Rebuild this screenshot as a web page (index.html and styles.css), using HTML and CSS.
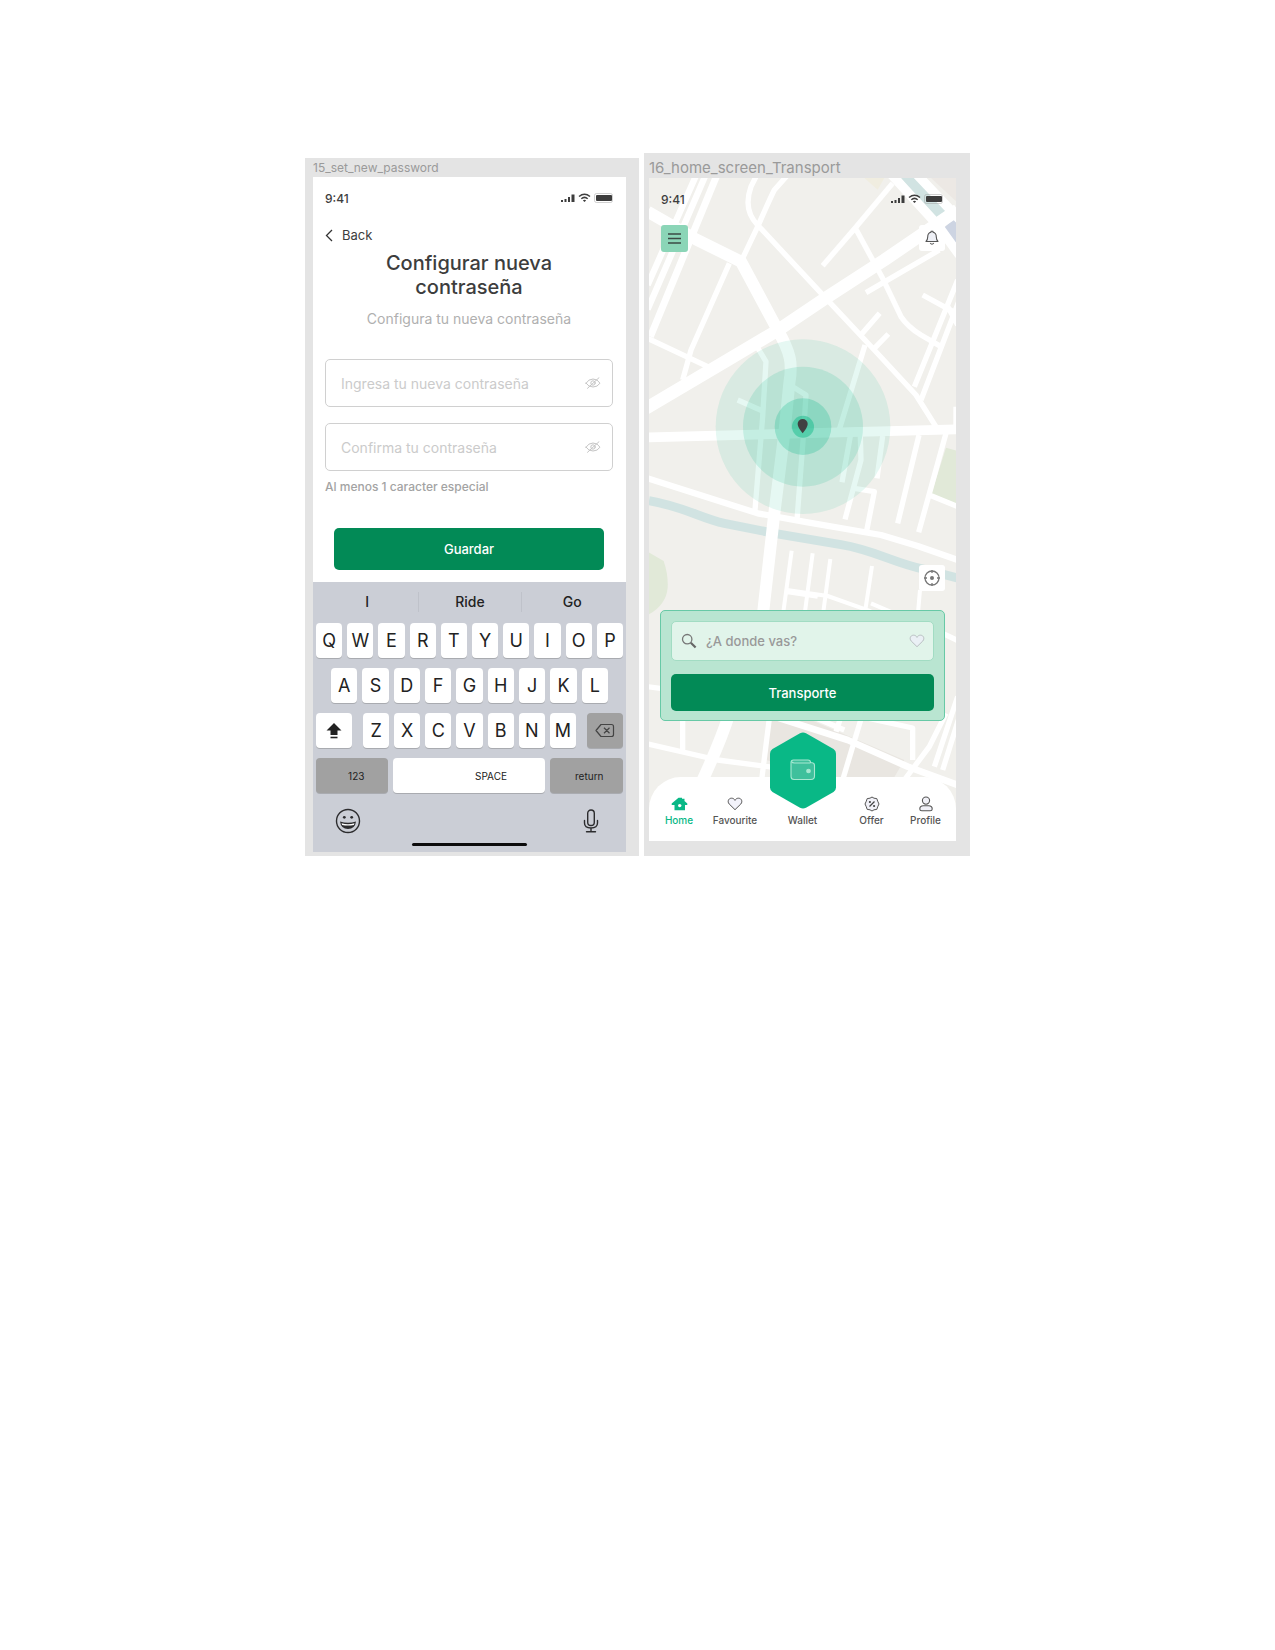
FILE: index.html
```html
<!DOCTYPE html>
<html lang="es">
<head>
<meta charset="utf-8">
<meta name="viewport" content="width=device-width, initial-scale=1">
<title>Configurar nueva contraseña</title>
<link rel="stylesheet" href="styles.css">
</head>
<body>
<svg class="defs" aria-hidden="true">
  <symbol id="status" viewBox="0 0 54 12">
    <g fill="#3d3d3d">
      <rect x="1" y="8" width="2" height="2"/><rect x="4.500" y="7" width="2" height="3"/><rect x="8" y="5" width="2" height="5"/><rect x="11.500" y="2.500" width="3" height="7.500"/>
      <rect x="36" y="3" width="16" height="6" rx="1"/>
    </g>
    <rect x="34.500" y="1.500" width="18" height="9" rx="2" fill="none" stroke="#999" stroke-opacity=".45"/>
    <g fill="none" stroke="#3d3d3d" stroke-width="1.500"><path d="M19 4.500Q24.500 0 30 4.500"/><path d="M21.300 6.800Q24.500 4 27.700 6.800"/></g>
    <path d="M22.900 8.400Q24.500 7 26.100 8.400L24.500 10Z" fill="#3d3d3d"/>
  </symbol>
  <symbol id="eye-off" viewBox="0 0 16 12">
    <g fill="none" stroke="#c4c4c4" stroke-linecap="round"><path d="M1 6.200Q3.500 2 8 2t7 4.200Q12.500 10 8 10T1 6.200Z"/><circle cx="8" cy="6" r="2.200"/><path d="M2.500 11.300 14 .7"/></g>
  </symbol>
  <symbol id="heart" viewBox="0 0 16 14">
    <path d="M8 12.700 2.200 7C.2 4.800 1.300 1.300 4.400 1.200 6.300 1.100 7.400 2.200 8 3.400c.6-1.200 1.700-2.300 3.600-2.200 3.100.1 4.200 3.600 2.200 5.800Z" fill="#eeeefa" fill-opacity=".7" stroke="currentColor" stroke-linejoin="round"/>
  </symbol>
</svg>

<main class="board">
  <section class="frame frame-password">
    <h2 class="frame-name">15_set_new_password</h2>
    <div class="screen password">
      <div class="status"><span>9:41</span><svg class="status-icons"><use href="#status"/></svg></div>
      <a class="back" href="#"><svg viewBox="0 0 8 13"><path d="M7 1 1.500 6.500 7 12" fill="none" stroke="#333" stroke-width="1.300"/></svg>Back</a>
      <form class="form">
        <h1>Configurar nueva contraseña</h1>
        <p class="lead">Configura tu nueva contraseña</p>
        <label class="field"><input type="password" placeholder="Ingresa tu nueva contraseña" aria-label="Ingresa tu nueva contraseña"><svg><use href="#eye-off"/></svg></label>
        <label class="field"><input type="password" placeholder="Confirma tu contraseña" aria-label="Confirma tu contraseña"><svg><use href="#eye-off"/></svg></label>
        <p class="hint">Al menos 1 caracter especial</p>
        <button class="primary save" type="button">Guardar</button>
      </form>
      <div class="keyboard">
        <div class="suggestions"><button>I</button><button>Ride</button><button>Go</button></div>
        <div class="keys"><button>Q</button><button>W</button><button>E</button><button>R</button><button>T</button><button>Y</button><button>U</button><button>I</button><button>O</button><button>P</button></div>
        <div class="keys home-row"><button>A</button><button>S</button><button>D</button><button>F</button><button>G</button><button>H</button><button>J</button><button>K</button><button>L</button></div>
        <div class="keys shift-row">
          <button class="modifier" aria-label="Shift"><svg width="16" height="18" viewBox="0 0 16 18"><path d="M8 1 15.500 8.500H11.500V13h-7V8.500H.5Z" fill="#222"/><path d="M4.500 15.500h7" stroke="#222" stroke-width="1.600"/></svg></button>
          <div class="keys letters"><button>Z</button><button>X</button><button>C</button><button>V</button><button>B</button><button>N</button><button>M</button></div>
          <button class="modifier dark" aria-label="Delete"><svg width="20" height="15" viewBox="0 0 20 15"><path d="M6 1.500h10.500q2 0 2 2v8q0 2-2 2H6L1 7.500Z M9 4.800l5.500 5.400M14.500 4.800 9 10.200" fill="none" stroke="#444" stroke-width="1.200" stroke-linejoin="round"/></svg></button>
        </div>
        <div class="keys bottom-row"><button class="dark numbers">123</button><button class="space">SPACE</button><button class="dark return">return</button></div>
        <div class="extras">
          <button aria-label="Emoji"><svg width="26" height="26" viewBox="0 0 26 26"><circle cx="13" cy="13" r="11.500" fill="none" stroke="#2c2c2e" stroke-width="1.400"/><circle cx="9.300" cy="9.300" r="1.400" fill="#2c2c2e"/><circle cx="16.700" cy="9.300" r="1.400" fill="#2c2c2e"/><path d="M5 13.500q8 2.500 16 0-1 7.500-8 7.500t-8-7.500Z" fill="#2c2c2e"/><path d="M6.500 15.300q6.500 1.700 13 0l-.6 1.600q-6 1.200-11.800 0Z" fill="#fff"/></svg></button>
          <button aria-label="Dictado"><svg width="16" height="24" viewBox="0 0 16 24"><g fill="none" stroke="#2c2c2e" stroke-width="1.400" stroke-linecap="round"><rect x="4.700" y="1" width="6.600" height="15.500" rx="3.300"/><path d="M1.500 11.500v2.500q0 5 6.500 5t6.500-5v-2.500M8 19v3.500M3.500 22.700h9"/></g></svg></button>
        </div>
        <div class="home-bar"></div>
      </div>
    </div>
  </section>

  <section class="frame frame-home">
    <h2 class="frame-name">16_home_screen_Transport</h2>
    <div class="screen transport">
      <svg class="map" viewBox="24 84 921 1989" preserveAspectRatio="xMidYMin slice" aria-hidden="true">
        <rect x="0" y="0" width="1000" height="2200" fill="#f1f0ec"/>
        <!-- parks, blocks and water -->
        <path d="M670 84h60l-20 35Z" fill="#f0ede0"/>
        <path d="M870 84h75v70Z" fill="#ece8e4"/>
        <path d="M780 84h60l76 98-38 26Z" fill="#d1e3e2"/>
        <path d="M908 235l32-32h10v88Z" fill="#cdd4e2"/>
        <path d="M915 893l35 10v160l-80-28Z" fill="#e1e9d8"/>
        <path d="M20 1205l48 28q14 40 12 80-4 50-56 80Z" fill="#e1e9d8"/>
        <path d="M390 1710h120l280 120-35 60H590L375 1830Z" fill="#e9e6e1"/>
        <path d="M24 1052C130 1070 180 1105 250 1120L400 1150 600 1184C700 1200 760 1240 850 1258L950 1284" fill="none" stroke="#d1e3e2" stroke-width="27"/>
        <g fill="none" stroke="#fff" stroke-width="16" stroke-linejoin="round">
          <path d="M168 70 20 405M196 70 20 478" stroke-width="19"/>
          <path d="M230 70 28 560" stroke-width="21"/>
          <path d="M20 185 165 268 300 335 410 540C450 610 455 640 445 700L430 850 400 1090 365 1400" stroke-width="36"/>
          <path d="M350 70 330 110Q305 180 350 225L550 440 700 600 825 735 888 835"/>
          <path d="M440 75 400 120Q385 150 350 230L300 335M265 340 150 600 125 690"/>
          <path d="M15 775 260 630 415 538 560 440 730 330 950 180" stroke-width="38"/>
          <path d="M755 100 640 237 545 347M645 238 725 385 780 500Q800 530 840 555L900 590"/>
          <path d="M675 428 895 300M845 435 950 492"/>
          <path d="M748 70 890 225 955 315" stroke-width="28"/>
          <path d="M815 60 955 208" stroke-width="28"/>
          <path d="M950 390 820 710M955 450 840 750M915 460 950 525"/>
          <path d="M655 560 716 490M700 595 742 552M20 565 205 652"/>
          <path d="M20 862 950 838" stroke-width="29"/>
          <path d="M345 585 375 635 365 800 342 1080M290 750 365 783M455 710 495 735 487 860 468 1110M672 585 590 855M945 770V840"/>
          <path d="M628 858 603 997M658 858 660 930 612 1108M725 858 708 985M834 855 770 1120M915 850 833 1147M865 1035 950 1070M640 1015 700 1025 677 1142"/>
          <path d="M20 985 350 1090 500 1117 720 1155 830 1188 950 1230" stroke-width="19"/>
          <path d="M452 1202 425 1400M515 1210 490 1400M568 1227 545 1400M693 1248 670 1400M438 1320 560 1338 690 1384M690 1360 760 1390M837 1320 830 1400M430 1325 530 1340" stroke-width="12"/>
          <path d="M905 1450 955 1474M20 1610 80 1618M125 1700V1800"/>
          <path d="M262 1700Q240 1770 185 1890" stroke-width="36"/>
          <path d="M20 1782 230 1830 420 1855M385 1705 362 1890"/>
          <path d="M400 1700 620 1770 800 1850 950 1905" stroke-width="20"/>
          <path d="M515 1700 610 1740M600 1700 585 1745M662 1700 605 1890M660 1700 815 1734V1830M820 1705 780 1700"/>
          <path d="M950 1640 880 1850M915 1690 865 1790 790 1890M955 1700 905 1860"/>
        </g>
        <!-- current location -->
        <g fill="#09b886">
          <circle cx="486" cy="830" r="262" fill-opacity=".1"/>
          <circle cx="486" cy="830" r="180" fill-opacity=".15"/>
          <circle cx="486" cy="830" r="85" fill-opacity=".25"/>
          <circle cx="486" cy="830" r="33" fill-opacity=".45"/>
        </g>
        <path d="M485 850Q470 832 470 822a15 15 0 0 1 30 0Q500 832 485 850Z" fill="#414141"/>
      </svg>
      <div class="status"><span>9:41</span><svg class="status-icons"><use href="#status"/></svg></div>
      <div class="toolbar">
        <button class="square menu" aria-label="Menu"><svg width="15" height="13" viewBox="0 0 15 13"><path d="M1 2h13M1 6.500h13M1 11h13" stroke="#3c4a45" stroke-width="1.300"/></svg></button>
        <button class="square" aria-label="Notificaciones"><svg width="14" height="16" viewBox="0 0 14 16"><path d="M1 11.500Q2.700 10 2.700 7 2.700 3 6 2.300v-1h2v1Q11.300 3 11.300 7q0 3 1.700 4.500Z" fill="#eef0f6" stroke="#555" stroke-width="1.100" stroke-linejoin="round"/><path d="M5.200 13q1.800 2.500 3.600 0" fill="none" stroke="#555" stroke-width="1.100"/></svg></button>
      </div>
      <div class="locate"><button class="square" aria-label="Mi ubicación"><svg width="18" height="18" viewBox="0 0 18 18"><g fill="none" stroke="#777" stroke-width="1.300"><circle cx="9" cy="9" r="7"/><path d="M9 1v3M9 14v3M1 9h3M14 9h3"/></g><circle cx="9" cy="9" r="2" fill="#777"/></svg></button></div>
      <form class="search-card">
        <label class="search">
          <svg width="16" height="16" viewBox="0 0 16 16"><circle cx="6.200" cy="6.200" r="4.700" fill="none" stroke="#777" stroke-width="1.300"/><path d="m9.800 9.800 4.800 4.700" stroke="#666" stroke-width="2.200"/></svg>
          <input type="text" placeholder="¿A donde vas?" aria-label="¿A donde vas?">
          <svg class="like" width="16" height="14"><use href="#heart"/></svg>
        </label>
        <button class="primary" type="button">Transporte</button>
      </form>
      <nav class="tabs">
        <a class="active" href="#"><svg width="17" height="14" viewBox="0 0 17 14"><path d="M7.500.8 11 .8 11 1.800 13.500 1.800 13.500 4.100 16.300 6.500v1.500H14v5.200H3.500V8H.7V6.500Z" fill="#09b886"/><circle cx="8.700" cy="8.600" r="1.700" fill="#fff"/></svg>Home</a>
        <a href="#"><svg width="16" height="14"><use href="#heart"/></svg>Favourite</a>
        <a class="wallet" href="#"><svg class="hexagon" width="66" height="77" viewBox="0 0 66 77"><path d="M30 1.300Q33-.3 36 1.300L63.500 17Q66 18.500 66 21.500v34Q66 58.500 63.500 60L36 75.800Q33 77.300 30 75.800L2.500 60Q0 58.500 0 55.500v-34Q0 18.500 2.500 17Z" fill="#09b886"/><g stroke="#a8e8d2" stroke-width="1.100"><path d="M21 30.500q0-2.500 2.500-2.500H38q2.500 0 2.500 2.500 4 0 4 3V44q0 3.500-3.500 3.500H24q-3 0-3-3Z" fill="#3fc09c"/><path d="M21.500 29.500q.5 1.500 3 1.500h16" fill="none"/><circle cx="38.500" cy="39" r="1.800" fill="#a8e8d2"/></g></svg>Wallet</a>
        <a href="#"><svg width="16" height="16" viewBox="0 0 16 16"><path d="M8 1 10 2.200 12.800 2.600 13.700 5.200 15 8 13.700 10.800 12.800 13.400 10 13.800 8 15 6 13.800 3.200 13.400 2.300 10.800 1 8 2.300 5.200 3.200 2.600 6 2.200Z" fill="#f1f1f8" stroke="#555" stroke-linejoin="round"/><path d="m5.500 10.500 5-5" stroke="#444" stroke-width="1.200"/><circle cx="5.900" cy="6" r="1.100" fill="#444"/><circle cx="10.100" cy="10" r="1.100" fill="#444"/></svg>Offer</a>
        <a href="#"><svg width="14" height="16" viewBox="0 0 14 16"><g fill="#f1f1f8" stroke="#555" stroke-width="1.100"><circle cx="7" cy="4.600" r="3.600"/><path d="M.8 13q0-3.200 3.500-3.200h5.400q3.500 0 3.500 3.200 0 1.800-2 1.800H2.800q-2 0-2-1.800Z"/></g></svg>Profile</a>
      </nav>
    </div>
  </section>
</main>
</body>
</html>
```
FILE: styles.css
```css
* { box-sizing: border-box; }

body {
  margin: 0;
  background: #fff;
  color: #3d3d3d;
  font-family: Inter, "Liberation Sans", sans-serif;
}

h1, h2, p { margin: 0; }
button, input { font: inherit; color: inherit; border: 0; padding: 0; margin: 0; }
button { background: none; }
a { color: inherit; text-decoration: none; }
svg { display: block; flex: none; }
.defs { position: absolute; width: 0; height: 0; }

.board {
  display: flex;
  flex-wrap: wrap;
  justify-content: center;
  align-items: flex-end;
  gap: 5px;
  padding: 153px 16px 48px;
}

.frame { min-width: 0; background: #e4e4e4; }
.frame-password { flex: 0 1 334px; padding: 0 13px 4px 8px; }
.frame-home { flex: 0 1 326px; padding: 0 14px 15px 5px; }

.frame-name {
  color: #9a9a9a;
  font-size: 12px;
  font-weight: 400;
  line-height: 19px;
}
.frame-home .frame-name { font-size: 15px; line-height: 25px; padding-top: 2px; height: 25px; }

.status {
  display: flex;
  align-items: center;
  justify-content: space-between;
  height: 42px;
  padding: 0 12px;
  font-size: 12px;
  font-weight: 500;
}
.status-icons { width: 54px; height: 12px; }

/* Password screen */
.password { background: #fff; }

.back {
  display: flex;
  align-items: center;
  gap: 9px;
  height: 32px;
  padding: 0 12px;
  font-size: 13px;
}
.back svg { width: 8px; height: 13px; }

.form {
  display: flex;
  flex-direction: column;
  padding: 0 13px 12px 12px;
}
.form h1 {
  align-self: center;
  max-width: 200px;
  font-size: 20px;
  font-weight: 500;
  line-height: 24px;
  text-align: center;
}
.lead {
  margin-top: 10px;
  color: #b0b0b0;
  font-size: 14px;
  line-height: 20px;
  text-align: center;
}
.field {
  display: flex;
  align-items: center;
  height: 48px;
  margin-bottom: 16px;
  padding: 0 11px 0 15px;
  border: 1px solid #d0d0d0;
  border-radius: 5px;
}
.lead + .field { margin-top: 30px; }
.field svg { width: 16px; height: 12px; }
input { flex: 1; width: 100%; min-width: 0; background: none; }
input::placeholder { color: inherit; opacity: 1; }
.field input { color: #cbcbcb; font-size: 14px; }
.hint {
  margin-top: -8px;
  color: #a3a3a3;
  font-size: 12px;
  font-weight: 500;
  line-height: 16px;
}

.primary {
  border-radius: 5px;
  background: #028a56;
  color: #fff;
  font-size: 13px;
  font-weight: 500;
}
.save { height: 42px; margin: 33px 9px 0; }

.keyboard {
  display: flex;
  flex-direction: column;
  gap: 10px;
  padding: 4px 3px 6px;
  background: #cbced6;
}
.suggestions {
  display: grid;
  grid-template-columns: repeat(3, 1fr);
  align-items: center;
  height: 27px;
  padding-top: 4px;
  font-size: 14px;
  font-weight: 500;
  color: #222;
}
.suggestions button { height: 20px; }
.suggestions button + button { border-left: 1px solid #bfc2ca; }

.keys { display: flex; gap: 5px; color: #222; font-size: 18px; }
.keys button {
  display: flex;
  align-items: center;
  justify-content: center;
  flex: 1 1 0;
  height: 35px;
  min-width: 0;
  border-radius: 4px;
  background: #fff;
  box-shadow: 0 1px 0 #a9abb0;
}
.home-row { padding: 0 15px; }
.shift-row { gap: 11px; }
.letters { flex: 1; }
.keys .modifier { flex: 0 0 36px; }
.keys .dark { background: #a1a1a1; }
.bottom-row {
  display: grid;
  grid-template-columns: 72fr 150fr 73fr;
  font-size: 10px;
}
.bottom-row .numbers { padding-left: 8px; }
.bottom-row .space { padding-left: 44px; }
.bottom-row .return { padding-left: 6px; }

.extras {
  display: flex;
  justify-content: space-between;
  align-items: center;
  height: 35px;
  margin-bottom: 3px;
  padding: 0 24px 0 19px;
}
.home-bar {
  align-self: center;
  width: 115px;
  height: 3px;
  margin-top: -8px;
  border-radius: 2px;
  background: #0c0c0c;
}

/* Transport screen */
.transport { position: relative; isolation: isolate; }
.map { position: absolute; inset: 0; width: 100%; height: 100%; z-index: -1; }
.toolbar {
  display: flex;
  justify-content: space-between;
  padding: 5px 11px 0 12px;
}
.square {
  display: flex;
  align-items: center;
  justify-content: center;
  width: 26px;
  height: 26px;
  border-radius: 3px;
  background: #fff;
}
.menu { width: 27px; height: 27px; background: #8bd5b7; }
.locate { display: flex; justify-content: flex-end; padding: 313px 11px 19px; }

.search-card {
  display: flex;
  flex-direction: column;
  gap: 13px;
  margin: 0 11px 56px;
  padding: 10px 10px 9px;
  border: 1px solid #67c9a6;
  border-radius: 5px;
  background: #b9e5d1;
}
.search {
  display: flex;
  align-items: center;
  gap: 9px;
  height: 40px;
  padding: 0 8px 0 9px;
  border: 1px solid #a2dcc3;
  border-radius: 5px;
  background: #e1f4ea;
  color: #999;
  font-size: 13px;
  font-weight: 500;
}
.like { color: #b9bfc2; }
.search-card .primary { height: 37px; }

.tabs {
  display: grid;
  grid-template-columns: 56fr 56fr 79fr 59fr 49fr;
  height: 64px;
  padding: 18px 6px 0 2px;
  border-radius: 32px 32px 0 0;
  background: #fff;
  color: #555;
  font-size: 10px;
  font-weight: 500;
  line-height: 12px;
}
.tabs a {
  position: relative;
  display: grid;
  grid-template-rows: 18px 12px;
  gap: 1px;
  align-content: start;
  justify-items: center;
  align-items: center;
}
.tabs .active { color: #09b886; }
.tabs .wallet { padding-top: 19px; grid-template-rows: 12px; }
.hexagon { position: absolute; left: calc(50% - 33px); top: -63px; }
```
